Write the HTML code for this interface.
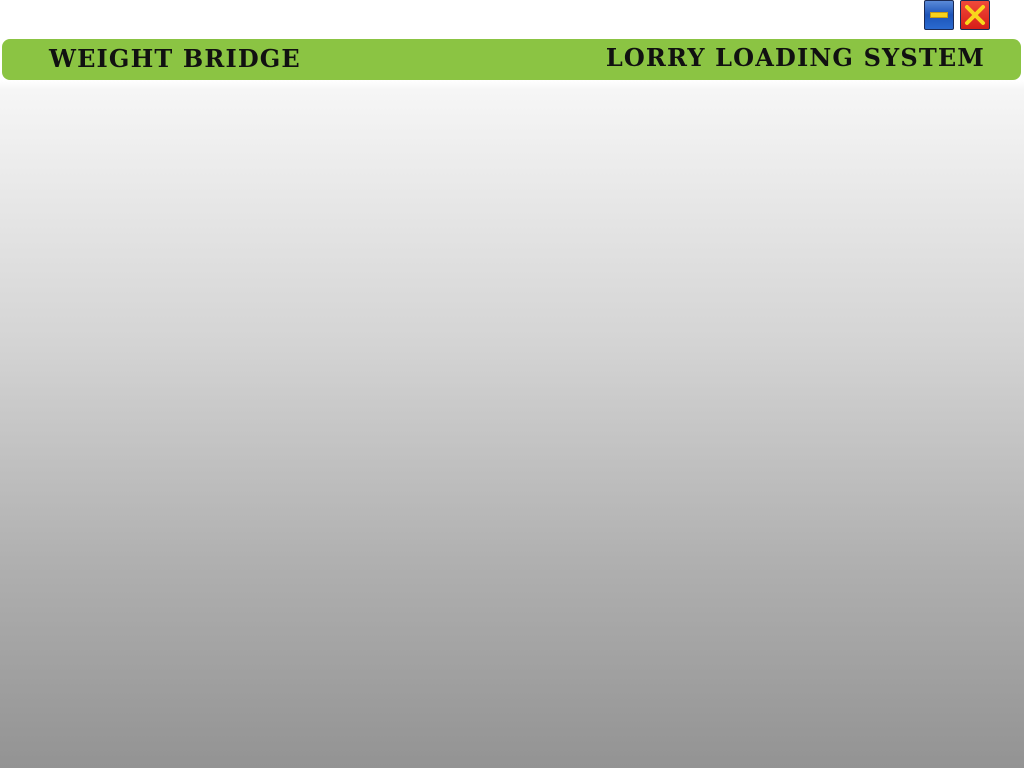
<!DOCTYPE html>
<html><head><style>
html,body{margin:0;padding:0;width:1024px;height:768px;overflow:hidden;}
body{background:linear-gradient(to bottom,#ffffff 0px,#ffffff 80px,#f6f6f6 90px,#d3d3d3 350px,#b0b0b0 560px,#939393 768px);position:relative;font-family:"DejaVu Serif","Liberation Serif",serif;}
.bar{position:absolute;left:2px;top:39px;width:1019px;height:41px;background:#8bc443;border-radius:8px;}
.t{position:absolute;top:43px;font-weight:bold;font-size:24px;letter-spacing:1.15px;color:#111;white-space:nowrap;}
.btn{position:absolute;top:0;width:30px;height:30px;box-sizing:border-box;border:1px solid #1b2a55;border-radius:2px;}
.min{left:924px;background:linear-gradient(#5a8ad8,#1d54b8 50%,#2a6ad0);}
.min:after{content:"";position:absolute;left:5px;top:11px;width:18px;height:6px;background:#f7d21c;border:1px solid #c79a10;box-sizing:border-box;}
.cls{left:960px;background:linear-gradient(#f04a3a,#d61e18);}
</style></head><body>
<div class="btn min"></div>
<div class="btn cls"><svg width="28" height="28" viewBox="0 0 28 28" style="position:absolute;left:0;top:0"><path d="M6 6L22 22M22 6L6 22" stroke="#f9d71c" stroke-width="4" stroke-linecap="round"/></svg></div>
<div class="bar"></div>
<div class="t" style="left:49px;top:44px">WEIGHT BRIDGE</div>
<div class="t" style="right:39px">LORRY LOADING SYSTEM</div>
</body></html>
